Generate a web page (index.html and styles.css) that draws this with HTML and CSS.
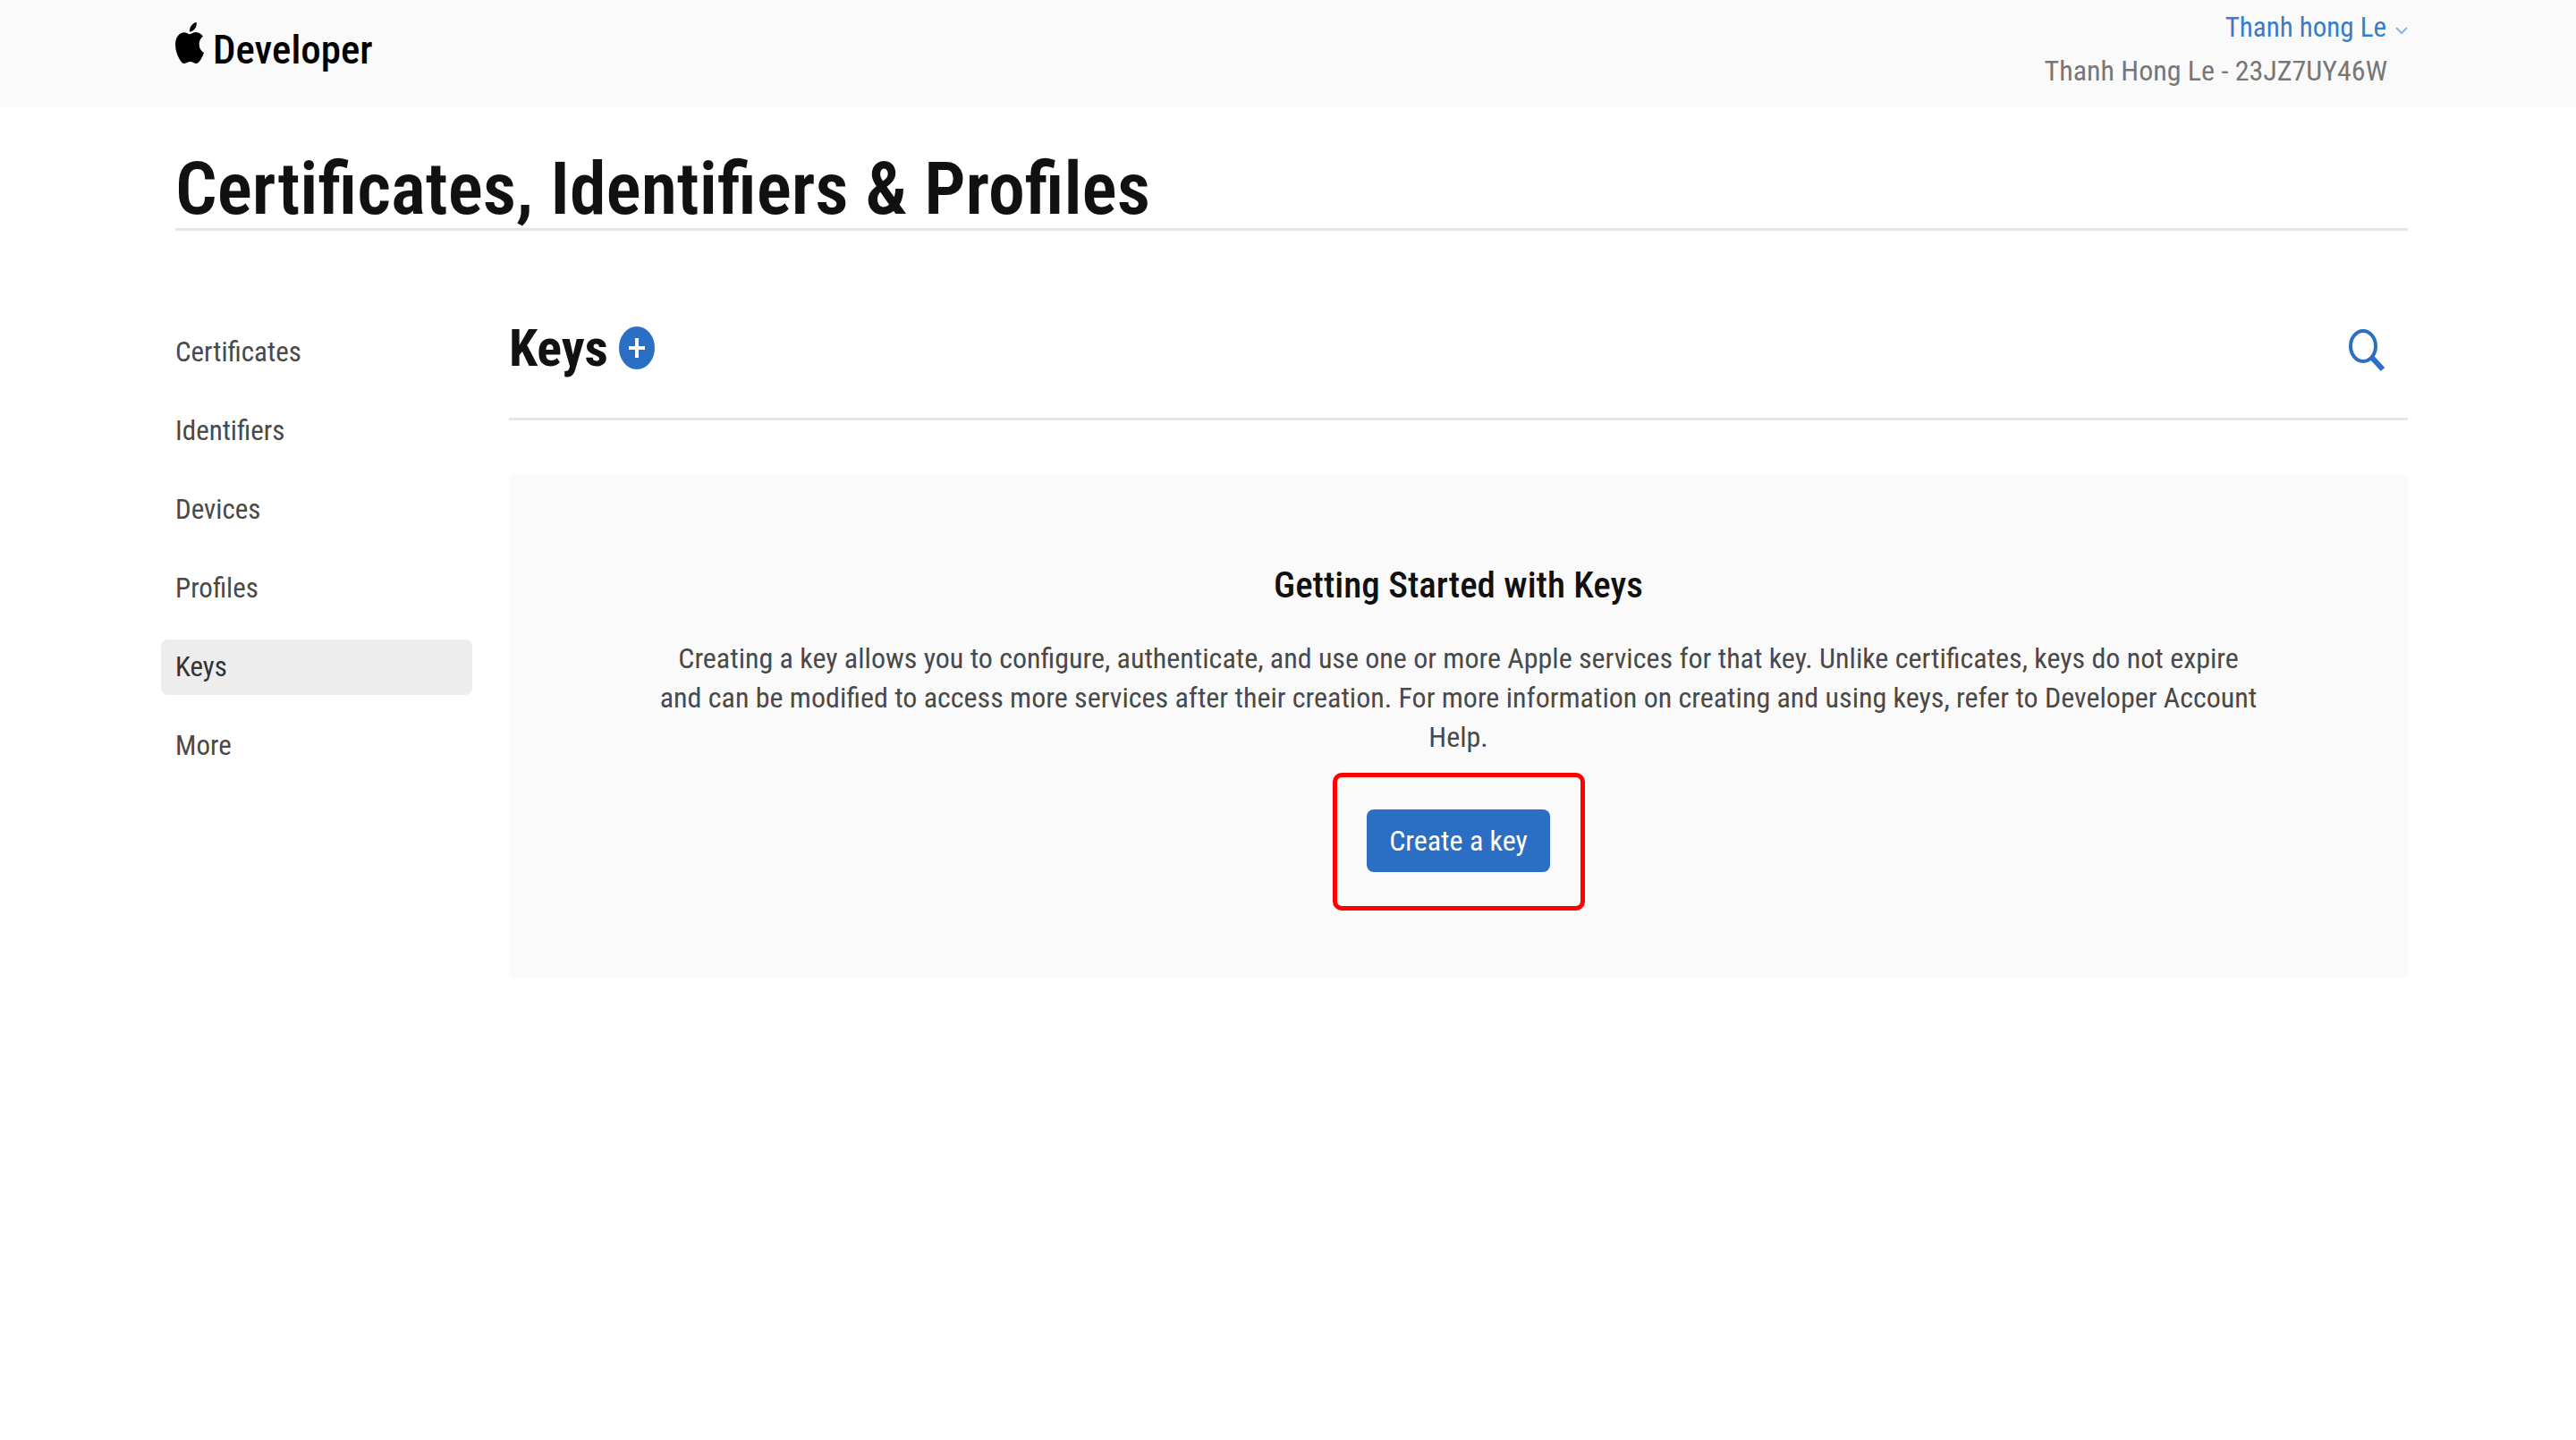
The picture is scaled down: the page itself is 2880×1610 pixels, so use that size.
FILE: index.html
```html
<!DOCTYPE html>
<html lang="en">
<head>
  <meta charset="utf-8">
  <meta name="viewport" content="width=device-width, initial-scale=1">
  <title>Keys - Certificates, Identifiers &amp; Profiles</title>
  <link rel="stylesheet" href="styles.css">
</head>
<body>
  <header class="topbar">
    <a class="brand" href="#">
      <svg class="brand-logo" viewBox="2.2 0 19.6 24" preserveAspectRatio="none" aria-hidden="true"><path d="M12.152 6.896c-.948 0-2.415-1.078-3.96-1.04-2.04.027-3.91 1.183-4.961 3.014-2.117 3.675-.546 9.103 1.519 12.09 1.013 1.454 2.208 3.09 3.792 3.039 1.52-.065 2.09-.987 3.935-.987 1.831 0 2.35.987 3.96.948 1.637-.026 2.676-1.48 3.676-2.948 1.156-1.688 1.636-3.325 1.662-3.415-.039-.013-3.182-1.221-3.22-4.857-.026-3.04 2.48-4.494 2.597-4.559-1.429-2.09-3.623-2.324-4.39-2.376-2-.156-3.675 1.09-4.61 1.09zM15.53 3.83c.843-1.012 1.4-2.427 1.245-3.83-1.207.052-2.662.805-3.532 1.818-.78.896-1.454 2.338-1.273 3.714 1.338.104 2.715-.688 3.559-1.701"/></svg>
      <span>Developer</span>
    </a>
    <div class="account">
      <a class="account-name" href="#">Thanh hong Le
        <svg class="chevron" viewBox="0 0 14 10" aria-hidden="true"><path d="M1 2l6 6 6-6"/></svg>
      </a>
      <span class="account-team">Thanh Hong Le - 23JZ7UY46W</span>
    </div>
  </header>

  <div class="page">
    <h1 class="page-title">Certificates, Identifiers &amp; Profiles</h1>

    <div class="columns">
      <nav class="sidebar" aria-label="Resources">
        <a href="#">Certificates</a>
        <a href="#">Identifiers</a>
        <a href="#">Devices</a>
        <a href="#">Profiles</a>
        <a class="active" href="#" aria-current="page">Keys</a>
        <a href="#">More</a>
      </nav>

      <main class="content">
        <div class="section-head">
          <h2 class="section-title">Keys</h2>
          <button class="icon-button" type="button" aria-label="Add a key">
            <svg class="plus" viewBox="0 0 40 48" aria-hidden="true"><ellipse cx="20" cy="24" rx="20" ry="24"/><path d="M20 13v22M11 24h18"/></svg>
          </button>
          <button class="icon-button search-button" type="button" aria-label="Search">
            <svg class="search" viewBox="0 0 42 56" aria-hidden="true"><ellipse cx="17" cy="26" rx="14" ry="17"/><path d="M27 39l12 13"/></svg>
          </button>
        </div>

        <section class="panel">
          <h3 class="panel-title">Getting Started with Keys</h3>
          <p class="panel-text">Creating a key allows you to configure, authenticate, and use one or more Apple services for that key. Unlike certificates, keys do not expire and can be modified to access more services after their creation. For more information on creating and using keys, refer to Developer Account Help.</p>
          <div class="highlighted">
            <button class="primary" type="button">Create a key</button>
          </div>
        </section>
      </main>
    </div>
  </div>
</body>
</html>
```
FILE: styles.css
```css
* {
  box-sizing: border-box;
}

body {
  margin: 0;
  background: #fff;
  color: #494949;
  font-family: "Roboto Condensed", Roboto, "Liberation Sans", sans-serif;
  font-size: 32px;
  line-height: 44px;
}

h1,
h2,
h3,
p {
  margin: 0;
}

a {
  color: inherit;
  text-decoration: none;
}

button {
  border: 0;
  padding: 0;
  font: inherit;
  cursor: pointer;
}

.topbar {
  display: flex;
  justify-content: space-between;
  align-items: flex-start;
  min-height: 120px;
  padding: 7px 188px 0 196px;
  background: #fafafa;
}

.brand {
  display: flex;
  align-items: baseline;
  gap: 10px;
  padding-top: 18px;
  color: #000;
  font-size: 45px;
  font-weight: 500;
}

.brand-logo {
  width: 32px;
  height: 46px;
}

.account {
  display: flex;
  flex-direction: column;
  align-items: flex-end;
  line-height: 48px;
}

.account-name {
  display: flex;
  align-items: center;
  gap: 10px;
  color: #3a7bcb;
  font-size: 31px;
}

.account-team {
  padding-right: 23px;
  color: #777;
}

.chevron {
  width: 14px;
  height: 10px;
  margin-top: 5px;
  fill: none;
  stroke: #8db3e2;
  stroke-width: 2;
}

.page {
  padding: 47px 188px 80px 196px;
}

.page-title {
  border-bottom: 3px solid #e6e6e6;
  color: #111;
  font-size: 82px;
  font-weight: 600;
  line-height: 88px;
}

.columns {
  display: grid;
  grid-template-columns: 332px minmax(0, 1fr);
  column-gap: 41px;
  align-items: start;
}

.sidebar {
  display: flex;
  flex-direction: column;
  gap: 26px;
  margin-left: -16px;
  padding-top: 105px;
}

.sidebar a {
  padding: 9px 16px;
  border-radius: 8px;
  font-size: 31px;
}

.sidebar .active {
  background: #ededed;
  color: #333;
}

.section-head {
  display: flex;
  align-items: center;
  gap: 12px;
  padding: 101px 25px 48px 0;
  border-bottom: 3px solid #e6e6e6;
}

.section-title {
  color: #111;
  font-size: 58px;
  font-weight: 700;
  line-height: 60px;
}

.icon-button {
  display: flex;
  background: none;
}

.search-button {
  margin-left: auto;
}

.plus {
  width: 40px;
  height: 48px;
  fill: #2b6fc4;
}

.plus path {
  stroke: #fff;
  stroke-width: 4;
}

.search {
  width: 42px;
  height: 56px;
  fill: none;
  stroke: #2b6fc4;
  stroke-width: 4;
}

.search path {
  stroke-width: 6;
}

.panel {
  display: flex;
  flex-direction: column;
  align-items: center;
  margin-top: 60px;
  padding: 100px 24px 119px;
  border-radius: 8px;
  background: #fafafa;
  text-align: center;
}

.panel-title {
  margin-bottom: 36px;
  color: #111;
  font-size: 41px;
  font-weight: 500;
  line-height: 48px;
}

.panel-text {
  max-width: 1792px;
}

.highlighted {
  position: relative;
  margin-top: 59px;
}

/* Red call-out drawn around the button */
.highlighted::after {
  content: "";
  position: absolute;
  inset: -41px -39px -43px -38px;
  border: 5px solid #f00;
  border-radius: 10px;
  pointer-events: none;
}

.primary {
  padding: 13px 25px;
  border-radius: 8px;
  background: #2b6fc4;
  color: #fff;
}
```
